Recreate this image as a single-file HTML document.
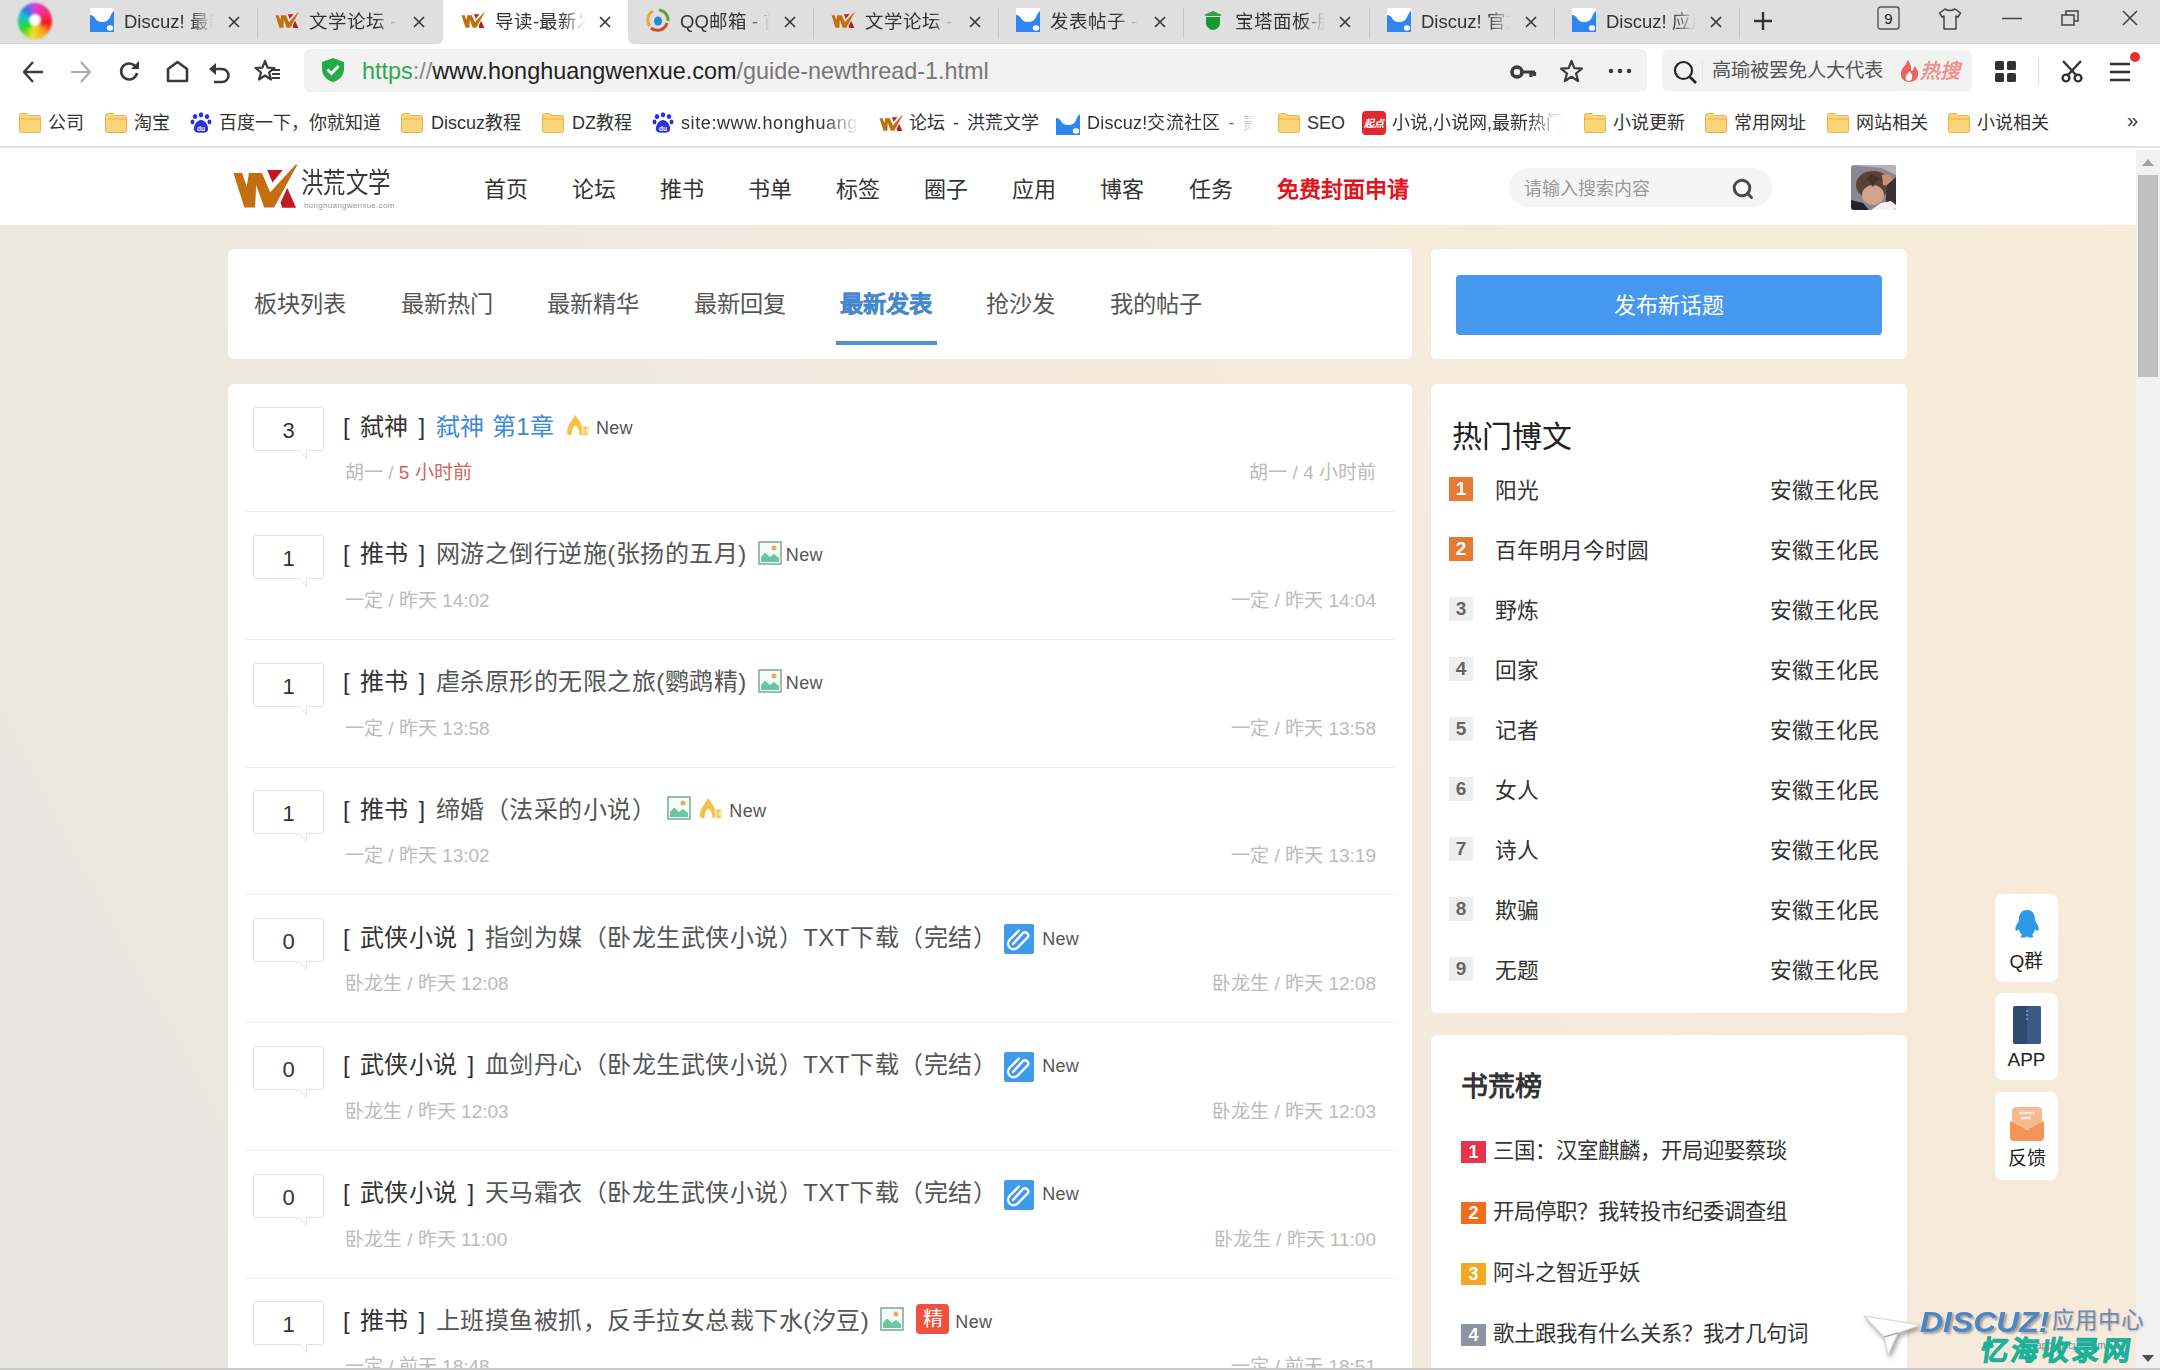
<!DOCTYPE html>
<html lang="zh-CN"><head><meta charset="utf-8">
<style>
*{box-sizing:border-box;margin:0;padding:0}
html,body{width:2160px;height:1370px;overflow:hidden;background:#fff;font-family:"Liberation Sans",sans-serif;color:#333}
.a{position:absolute;white-space:nowrap}
svg{position:absolute;overflow:visible}
/* chrome */
#tabbar{position:absolute;left:0;top:0;width:2160px;height:44px;background:#dfdfdf}
.tab{position:absolute;top:0;height:44px;width:185px}
.tab .t{position:absolute;white-space:nowrap;left:52px;top:9px;font-size:18.5px;line-height:26px;color:#333;width:90px;overflow:hidden;-webkit-mask-image:linear-gradient(90deg,#000 74%,transparent 100%)}
.tab .x{position:absolute;left:162px;top:16px;width:12px;height:12px}
.tab.act{background:#fff}
.tab:not(.act):after{content:"";position:absolute}
.fade{overflow:hidden;-webkit-mask-image:linear-gradient(90deg,#000 80%,transparent)}
.sep{position:absolute;top:8px;width:1px;height:31px;background:#c4c4c4}
#toolbar{position:absolute;left:0;top:44px;width:2160px;height:56px;background:#fff}
#bm{position:absolute;left:0;top:100px;width:2160px;height:48px;background:#fff;border-bottom:2px solid #e3e3e3}
.bmi{position:absolute;white-space:nowrap;top:11px;font-size:18px;line-height:24px;color:#333}
/* page */
#page{position:absolute;left:0;top:150px;width:2136px;height:1220px;background:linear-gradient(62deg,#e7e6e0 0%,#ede8de 30%,#f4eadc 60%,#f9ecd9 100%);overflow:hidden}
#hdr{position:absolute;left:0;top:0;width:2136px;height:75px;background:#fff}
.nav{position:absolute;top:23px;font-size:22px;line-height:34px;color:#333}
.card{position:absolute;background:#fff;border-radius:6px}
.ptab{position:absolute;top:38px;font-size:23.2px;line-height:34px;color:#555}
.row{position:absolute;left:0;width:1184px;height:128px}
.cnt{position:absolute;left:25px;top:23px;width:71px;height:44px;border:1px solid #e3e3e3;border-radius:3px;background:#fff;font-size:22px;line-height:45px;text-align:center;color:#333}
.cnt:after{content:"";position:absolute;left:44px;bottom:-9px;width:0;height:0;border-left:9px solid transparent;border-top:9px solid #e3e3e3}
.cnt:before{content:"";position:absolute;left:45px;bottom:-7px;width:0;height:0;border-left:7px solid transparent;border-top:7px solid #fff;z-index:2}
.ttl{position:absolute;left:115px;top:25.5px;font-size:24px;line-height:34px;color:#555;letter-spacing:.5px}
.ttl b{font-weight:normal;color:#333}
.ttl i{font-style:normal;display:inline-block;letter-spacing:0}
.lb{width:16.5px}
.rb{width:27.2px;padding-left:10px}
.meta{position:absolute;left:117px;top:76px;font-size:19px;line-height:26px;color:#bbb}
.meta2{position:absolute;right:36px;top:76px;font-size:19px;line-height:26px;color:#bbb}
.rsep{position:absolute;left:18px;right:16px;bottom:0;height:1px;background:#eee}
.new{font-size:18px;color:#555;letter-spacing:.3px;position:relative;top:-1px}
.hb{position:absolute;left:18px;margin-top:-1px;width:24px;height:24px;font-size:19px;line-height:24px;text-align:center;font-weight:bold;background:#eee;color:#666}
.hbt{position:absolute;left:64px;margin-top:1px;font-size:21.7px;line-height:30px;color:#333}
.hba{position:absolute;right:27px;margin-top:1px;font-size:21.7px;line-height:30px;color:#333}
.sb{position:absolute;left:30px;margin-top:2px;width:25px;height:22px;font-size:18px;line-height:22px;font-weight:bold;text-align:center;color:#fff}
.sbt{position:absolute;left:62px;font-size:21.4px;line-height:30px;color:#333}
.fb{position:absolute;left:1995px;width:63px;background:#fff;border-radius:8px}
.fb .l{position:absolute;left:0;width:63px;text-align:center;font-size:19px;line-height:24px;color:#222}
.ic{position:relative;vertical-align:middle;margin:0 4px 0 4px;top:-3px}
.jing{display:inline-block;vertical-align:middle;position:relative;top:-3px;width:33px;height:30px;background:#ef5140;color:#fff;font-size:20px;line-height:30px;text-align:center;border-radius:4px;margin:0 6px 0 8px}
</style></head><body>

<svg width="0" height="0" style="position:absolute">
<defs>
<symbol id="idz" viewBox="0 0 24 24"><rect x="0" y="0" width="24" height="24" fill="#2f86ee"/><path d="M0 0H24V3C22 4 21 7 20 9C19 12 16 14 12 14C8 14 6 12 5 10C4 8 2 7 0 7Z" fill="#fff"/><ellipse cx="20" cy="20" rx="3.2" ry="2.8" fill="#fff"/></symbol>
<symbol id="iwx" viewBox="2 3 66 46"><path d="M3.4 12.9H12.15L16.7 26.6L19 12.9H31.9L40.2 32.3L66 4.2L67.2 4.9L44 47.5H34.2L26.2 25L25.1 47.5H14.4Z" fill="#c36f10"/><path d="M37.2 9.9H52.8L42.5 22.4Z" fill="#c01a22"/><path d="M57.3 28.1L66.1 47.8H52.4L50.5 42.5Z" fill="#c01a22"/></symbol>
<symbol id="iqq" viewBox="0 0 24 24"><path d="M4 18A10 10 0 0 1 7 3" stroke="#e9a93b" stroke-width="3" fill="none"/><path d="M13 2A10 10 0 0 1 22 13" stroke="#5aa832" stroke-width="3" fill="none"/><path d="M21 15A10 10 0 0 1 5 20" stroke="#d9481e" stroke-width="3" fill="none"/><ellipse cx="12" cy="13" rx="4" ry="4.6" fill="#1a8ed8"/></symbol>
<symbol id="ibt" viewBox="0 0 24 24"><path d="M3 7L12 3L21 7L19 8H5Z" fill="#3a9a55"/><path d="M5 9H19V15C19 19 15 22 12 22C9 22 5 19 5 15Z" fill="#139a33"/></symbol>
<symbol id="ifold" viewBox="0 0 24 22"><path d="M1.5 3.5Q1.5 1.5 3.5 1.5H9L11 3.5H20.5Q22.5 3.5 22.5 5.5V18.5Q22.5 20.5 20.5 20.5H3.5Q1.5 20.5 1.5 18.5Z" fill="#fcd57a" stroke="#e8b34d" stroke-width="1"/><path d="M1.5 7H22.5" stroke="#e8b34d" stroke-width="1"/></symbol>
<symbol id="ipaw" viewBox="0 0 22 22"><ellipse cx="5" cy="4.5" rx="2.2" ry="2.6" fill="#2932e1"/><ellipse cx="11" cy="2.8" rx="2.2" ry="2.6" fill="#2932e1"/><ellipse cx="17" cy="4.5" rx="2.2" ry="2.6" fill="#2932e1"/><ellipse cx="2.5" cy="10" rx="2" ry="2.4" fill="#2932e1"/><ellipse cx="19.5" cy="10" rx="2" ry="2.4" fill="#2932e1"/><path d="M11 8C7 8 3 14 4 18C5 21 9 21 11 20.5C13 21 17 21 18 18C19 14 15 8 11 8Z" fill="#2932e1"/><text x="11" y="18.5" font-size="6.5" fill="#fff" text-anchor="middle" font-family="Liberation Sans" font-weight="bold">du</text></symbol>
</defs></svg>
<div id="tabbar">
<div style="position:absolute;left:18px;top:3px;width:34px;height:36px;border-radius:50%;background:conic-gradient(from 0deg,#e53ad8 0deg,#f22a55 70deg,#f01a1a 100deg,#f5a21c 140deg,#f2e12a 190deg,#28d22a 240deg,#1bc8d0 290deg,#2a7de8 320deg,#e53ad8 360deg);filter:blur(0.8px)"></div>
<div style="position:absolute;left:29px;top:14px;width:12px;height:12px;border-radius:50%;background:#fff;filter:blur(1px)"></div>
<div class="tab" style="left:72px"><svg style="left:18px;top:8px" width="24" height="24"><use href="#idz"/></svg><div class="t">Discuz! 最新</div><svg style="left:156px;top:16px" width="12" height="12"><path d="M1 1L11 11M11 1L1 11" stroke="#3a3a3a" stroke-width="1.7"/></svg></div>
<div class="tab" style="left:257px"><svg style="left:18px;top:11px" width="24" height="18"><use href="#iwx"/></svg><div class="t">文学论坛 - 洪</div><svg style="left:156px;top:16px" width="12" height="12"><path d="M1 1L11 11M11 1L1 11" stroke="#3a3a3a" stroke-width="1.7"/></svg></div>
<div class="tab act" style="left:443px"><svg style="left:18px;top:11px" width="24" height="18"><use href="#iwx"/></svg><div class="t">导读-最新发表</div><svg style="left:156px;top:16px" width="12" height="12"><path d="M1 1L11 11M11 1L1 11" stroke="#3a3a3a" stroke-width="1.7"/></svg></div>
<div class="tab" style="left:628px"><svg style="left:18px;top:8px" width="24" height="24"><use href="#iqq"/></svg><div class="t">QQ邮箱 - 首</div><svg style="left:156px;top:16px" width="12" height="12"><path d="M1 1L11 11M11 1L1 11" stroke="#3a3a3a" stroke-width="1.7"/></svg></div>
<div class="tab" style="left:813px"><svg style="left:18px;top:11px" width="24" height="18"><use href="#iwx"/></svg><div class="t">文学论坛 - 洪</div><svg style="left:156px;top:16px" width="12" height="12"><path d="M1 1L11 11M11 1L1 11" stroke="#3a3a3a" stroke-width="1.7"/></svg></div>
<div class="tab" style="left:998px"><svg style="left:18px;top:8px" width="24" height="24"><use href="#idz"/></svg><div class="t">发表帖子 - 洪</div><svg style="left:156px;top:16px" width="12" height="12"><path d="M1 1L11 11M11 1L1 11" stroke="#3a3a3a" stroke-width="1.7"/></svg></div>
<div class="tab" style="left:1183px"><svg style="left:18px;top:8px" width="24" height="24"><use href="#ibt"/></svg><div class="t">宝塔面板-服</div><svg style="left:156px;top:16px" width="12" height="12"><path d="M1 1L11 11M11 1L1 11" stroke="#3a3a3a" stroke-width="1.7"/></svg></div>
<div class="tab" style="left:1369px"><svg style="left:18px;top:8px" width="24" height="24"><use href="#idz"/></svg><div class="t">Discuz! 官方</div><svg style="left:156px;top:16px" width="12" height="12"><path d="M1 1L11 11M11 1L1 11" stroke="#3a3a3a" stroke-width="1.7"/></svg></div>
<div class="tab" style="left:1554px"><svg style="left:18px;top:8px" width="24" height="24"><use href="#idz"/></svg><div class="t">Discuz! 应用</div><svg style="left:156px;top:16px" width="12" height="12"><path d="M1 1L11 11M11 1L1 11" stroke="#3a3a3a" stroke-width="1.7"/></svg></div>
<div class="sep" style="left:257px"></div>
<div class="sep" style="left:813px"></div>
<div class="sep" style="left:998px"></div>
<div class="sep" style="left:1183px"></div>
<div class="sep" style="left:1369px"></div>
<div class="sep" style="left:1554px"></div>
<div class="sep" style="left:1739px"></div>
<svg style="left:1753px;top:11px" width="20" height="20"><path d="M10 1V19M1 10H19" stroke="#333" stroke-width="2.4"/></svg>
<svg style="left:1877px;top:6px" width="23" height="24"><rect x="1" y="1" width="21" height="22" rx="2.5" fill="none" stroke="#555" stroke-width="1.4"/><text x="11.5" y="18" font-size="15" text-anchor="middle" fill="#222" font-family="Liberation Sans">9</text></svg>
<svg style="left:1938px;top:7px" width="24" height="24"><path d="M7 2L1.5 6L4 10L6 9V22H18V9L20 10L22.5 6L17 2Q12 5 7 2Z" fill="none" stroke="#444" stroke-width="1.5" stroke-linejoin="round"/></svg>
<svg style="left:2002px;top:17px" width="20" height="3"><path d="M0 1.5H20" stroke="#444" stroke-width="1.5"/></svg>
<svg style="left:2061px;top:10px" width="18" height="16"><path d="M1 5H13V15H1Z M5 5V1H17V11H13" fill="none" stroke="#444" stroke-width="1.5"/></svg>
<svg style="left:2122px;top:10px" width="16" height="16"><path d="M1 1L15 15M15 1L1 15" stroke="#444" stroke-width="1.6"/></svg>
</div>
<div style="position:absolute;left:436px;top:38px;width:7px;height:6px;background:#fff"><div style="width:7px;height:6px;background:#dfdfdf;border-bottom-right-radius:6px"></div></div>
<div style="position:absolute;left:628px;top:38px;width:7px;height:6px;background:#fff"><div style="width:7px;height:6px;background:#dfdfdf;border-bottom-left-radius:6px"></div></div>
<div style="position:absolute;left:0;top:43px;width:437px;height:1px;background:#d8d8d8"></div><div style="position:absolute;left:634px;top:43px;width:1526px;height:1px;background:#d8d8d8"></div>
<div id="toolbar">
<svg style="left:22px;top:16px" width="22" height="24"><path d="M21 12H2M11 2L2 12L11 22" fill="none" stroke="#3a3a3a" stroke-width="2.4" stroke-linejoin="round"/></svg>
<svg style="left:70px;top:16px" width="22" height="24"><path d="M1 12H20M11 2L20 12L11 22" fill="none" stroke="#aaa" stroke-width="2.2"/></svg>
<svg style="left:118px;top:16px" width="23" height="23"><path d="M19 13A8 8 0 1 1 17 6" fill="none" stroke="#3a3a3a" stroke-width="2.6"/><path d="M21 1V9H13Z" fill="#3a3a3a"/></svg>
<svg style="left:166px;top:16px" width="23" height="23"><path d="M2 9L11.5 2L21 9V21H2Z" fill="none" stroke="#3a3a3a" stroke-width="2.6" stroke-linejoin="round"/></svg>
<svg style="left:208px;top:17px" width="23" height="23"><path d="M3 8H14A6.5 6.5 0 0 1 14 21H6" fill="none" stroke="#3a3a3a" stroke-width="2.6"/><path d="M8 2V14L1 8Z" fill="#3a3a3a"/></svg>
<svg style="left:255px;top:16px" width="26" height="23"><path d="M10 1L12.6 7.6L19.5 8L14 12.5L16 19.5L10 15.5L4 19.5L6 12.5L0.5 8L7.4 7.6Z" fill="none" stroke="#3a3a3a" stroke-width="2.2" stroke-linejoin="round"/><path d="M16 10H25M17 14H25M17 18H25" stroke="#3a3a3a" stroke-width="2.2"/></svg>
<div style="position:absolute;left:304px;top:5px;width:1343px;height:43px;background:#f2f2f2;border-radius:6px"></div>
<svg style="left:321px;top:13px" width="24" height="26"><path d="M12 1L23 5V12C23 19 17 24 12 25C7 24 1 19 1 12V5Z" fill="#22ab48"/><path d="M6.5 12.5L10.5 16.5L17.5 9" fill="none" stroke="#fff" stroke-width="2.8"/></svg>
<div class="a" style="left:362px;top:12px;font-size:23.4px;line-height:30px;color:#222"><span style="color:#2fa84f">https</span><span style="color:#888">://</span>www.honghuangwenxue.com<span style="color:#777">/guide-newthread-1.html</span></div>
<svg style="left:1510px;top:17px" width="26" height="22"><circle cx="7" cy="11" r="5" fill="none" stroke="#3a3a3a" stroke-width="3.6"/><path d="M11 11H25M21 11V16M24.5 11V15" stroke="#3a3a3a" stroke-width="3.2"/></svg>
<svg style="left:1559px;top:15px" width="25" height="25"><path d="M12.5 2L15.3 9.2L23 9.6L17 14.5L19.2 22L12.5 17.8L5.8 22L8 14.5L2 9.6L9.7 9.2Z" fill="none" stroke="#3a3a3a" stroke-width="2.2" stroke-linejoin="round"/></svg>
<svg style="left:1608px;top:24px" width="24" height="6"><circle cx="3" cy="3" r="2.3" fill="#3a3a3a"/><circle cx="12" cy="3" r="2.3" fill="#3a3a3a"/><circle cx="21" cy="3" r="2.3" fill="#3a3a3a"/></svg>
<div style="position:absolute;left:1662px;top:6px;width:310px;height:41px;background:#f2f2f2;border-radius:6px"></div>
<svg style="left:1673px;top:16px" width="25" height="25"><circle cx="10.5" cy="10.5" r="8.5" fill="none" stroke="#222" stroke-width="2.2"/><path d="M17 17L23 23" stroke="#222" stroke-width="2.6"/></svg>
<div style="position:absolute;left:1702px;top:16px;width:1px;height:22px;background:#e6e6e6"></div>
<div class="a" style="left:1712px;top:13px;font-size:19.3px;line-height:28px;color:#555">高瑜被罢免人大代表</div>
<svg style="left:1898px;top:15px" width="22" height="24"><path d="M9 1C10 5 4 8 3 13C2 19 6 23 11 23C17 23 21 19 20 13C19 9 16 7 16 7C16 10 15 12 13 12C14 8 12 3 9 1Z" fill="#f06060"/><path d="M11 22C8 22 7 19 8 17C9 15 11 14 11 12C13 14 15 16 14 19C14 21 12 22 11 22Z" fill="#fff"/></svg>
<div class="a" style="left:1920px;top:13px;font-size:20px;line-height:28px;color:#f06a6a;font-weight:bold;font-style:italic;opacity:.7">热搜</div>
<svg style="left:1995px;top:17px" width="21" height="21"><rect x="0" y="0" width="9" height="9" rx="1.5" fill="#333"/><rect x="12" y="0" width="9" height="9" rx="1.5" fill="#333"/><rect x="0" y="12" width="9" height="9" rx="1.5" fill="#333"/><rect x="12" y="12" width="9" height="9" rx="1.5" fill="#333"/></svg>
<div style="position:absolute;left:2038px;top:14px;width:1px;height:27px;background:#ddd"></div>
<svg style="left:2060px;top:15px" width="24" height="24"><path d="M3 2L17 17M21 2L7 17" stroke="#333" stroke-width="2.4"/><circle cx="6" cy="19" r="3.4" fill="none" stroke="#333" stroke-width="2.4"/><circle cx="18" cy="19" r="3.4" fill="none" stroke="#333" stroke-width="2.4"/></svg>
<svg style="left:2110px;top:18px" width="22" height="20"><path d="M0 2H20M0 10H20M0 18H20" stroke="#333" stroke-width="2.6"/></svg>
<div style="position:absolute;left:2130px;top:8px;width:10px;height:10px;border-radius:50%;background:#e8312b"></div>
</div>
<div id="bm">
<svg style="left:18px;top:12px" width="24" height="22"><use href="#ifold"/></svg><div class="bmi" style="left:48px">公司</div>
<svg style="left:104px;top:12px" width="24" height="22"><use href="#ifold"/></svg><div class="bmi" style="left:134px">淘宝</div>
<svg style="left:190px;top:12px" width="22" height="22"><use href="#ipaw"/></svg><div class="bmi" style="left:219px">百度一下，你就知道</div>
<svg style="left:400px;top:12px" width="24" height="22"><use href="#ifold"/></svg><div class="bmi" style="left:431px">Discuz教程</div>
<svg style="left:541px;top:12px" width="24" height="22"><use href="#ifold"/></svg><div class="bmi" style="left:572px">DZ教程</div>
<svg style="left:652px;top:12px" width="22" height="22"><use href="#ipaw"/></svg><div class="bmi fade" style="left:681px;width:178px;letter-spacing:.6px">site:www.honghuang</div>
<svg style="left:879px;top:14px" width="24" height="18"><use href="#iwx"/></svg><div class="bmi" style="left:909px;word-spacing:3px">论坛 - 洪荒文学</div>
<svg style="left:1056px;top:11px" width="24" height="24"><use href="#idz"/></svg><div class="bmi fade" style="left:1087px;width:168px;word-spacing:3px;letter-spacing:.2px">Discuz!交流社区 - 贰</div>
<svg style="left:1277px;top:12px" width="24" height="22"><use href="#ifold"/></svg><div class="bmi" style="left:1307px">SEO</div>
<svg style="left:1362px;top:111px;top:11px" width="24" height="24"><rect x="0" y="0" width="24" height="24" rx="4" fill="#e4262e"/><text x="12" y="16" font-size="10" fill="#fff" text-anchor="middle" font-weight="bold" font-style="italic" font-family="Liberation Sans">起点</text></svg><div class="bmi fade" style="left:1392px;width:170px">小说,小说网,最新热门</div>
<svg style="left:1583px;top:12px" width="24" height="22"><use href="#ifold"/></svg><div class="bmi" style="left:1613px">小说更新</div>
<svg style="left:1704px;top:12px" width="24" height="22"><use href="#ifold"/></svg><div class="bmi" style="left:1734px">常用网址</div>
<svg style="left:1826px;top:12px" width="24" height="22"><use href="#ifold"/></svg><div class="bmi" style="left:1856px">网站相关</div>
<svg style="left:1947px;top:12px" width="24" height="22"><use href="#ifold"/></svg><div class="bmi" style="left:1977px">小说相关</div>
<div class="bmi" style="left:2127px;top:8px;font-size:20px">»</div>
</div>

<div id="page">
<div id="hdr">
<svg style="left:230px;top:10px" width="70" height="52" viewBox="0 0 70 52">
<path d="M3.4 12.9H12.15L16.7 26.6L19 12.9H31.9L40.2 32.3L66 4.2L67.2 4.9L44 47.5H34.2L26.2 25L25.1 47.5H14.4Z" fill="#c36f10"/>
<path d="M37.2 9.9H52.8L42.5 22.4Z" fill="#c01a22"/>
<path d="M57.3 28.1L66.1 47.8H52.4L50.5 42.5Z" fill="#c01a22"/>
</svg>
<div class="a" style="left:301px;top:16px;font-size:28px;line-height:36px;color:#3a3a3a;transform:scaleX(0.8);transform-origin:0 0">洪荒文学</div>
<div class="a" style="left:304px;top:51px;font-size:8px;line-height:10px;color:#999;letter-spacing:0.3px">honghuangwenxue.com</div>

<div class="nav" style="left:484px">首页</div>
<div class="nav" style="left:572px">论坛</div>
<div class="nav" style="left:660px">推书</div>
<div class="nav" style="left:748px">书单</div>
<div class="nav" style="left:836px">标签</div>
<div class="nav" style="left:924px">圈子</div>
<div class="nav" style="left:1012px">应用</div>
<div class="nav" style="left:1100px">博客</div>
<div class="nav" style="left:1189px">任务</div>
<div class="nav" style="left:1277px;color:#e1141e;font-weight:bold">免费封面申请</div>
<div style="position:absolute;left:1509px;top:18px;width:263px;height:39px;border-radius:20px;background:#f5f5f5"></div>
<div class="a" style="left:1524px;top:26px;font-size:18px;line-height:26px;color:#999">请输入搜索内容</div>
<svg style="left:1732px;top:28px" width="22" height="22"><circle cx="10" cy="10" r="7.8" fill="none" stroke="#4a4a4a" stroke-width="3"/><path d="M15.5 15.5L19.5 19.5" stroke="#4a4a4a" stroke-width="3" stroke-linecap="round"/></svg>
<svg style="left:1851px;top:15px" width="45" height="45" viewBox="0 0 45 45"><defs><clipPath id="avc"><rect width="45" height="45" rx="3"/></clipPath></defs><g clip-path="url(#avc)">
<rect width="45" height="45" fill="#8d8793"/>
<path d="M0 0H45V10L30 3Z" fill="#b8b2b8"/>
<ellipse cx="22" cy="20" rx="17" ry="14" fill="#5b4236"/>
<ellipse cx="22" cy="30" rx="11" ry="10" fill="#d3a28c"/>
<path d="M10 20L16 14L22 22L28 13L34 20L30 14L20 9Z" fill="#4a3328"/>
<path d="M31 10Q40 8 42 16Q40 22 32 20Z" fill="#c79275"/>
<path d="M36 20L45 12V45H34Z" fill="#3a3038"/>
<path d="M0 35L12 38L18 45H0Z" fill="#222430"/>
<path d="M20 45L30 38L40 36L45 40V45Z" fill="#f2f1f0"/>
</g></svg>
</div>
<div class="card" style="left:228px;top:99px;width:1184px;height:110px">
<div class="ptab" style="left:26px">板块列表</div>
<div class="ptab" style="left:173px">最新热门</div>
<div class="ptab" style="left:319px">最新精华</div>
<div class="ptab" style="left:466px">最新回复</div>
<div class="ptab" style="left:612px;color:#4589cc;font-weight:bold;-webkit-text-stroke:.4px #4589cc">最新发表</div>
<div class="ptab" style="left:758px">抢沙发</div>
<div class="ptab" style="left:882px">我的帖子</div>
<div style="position:absolute;left:608px;top:92px;width:101px;height:4px;background:#5093cf"></div>
</div>
<div class="card" style="left:1431px;top:99px;width:476px;height:110px">
<div style="position:absolute;left:25px;top:26px;width:426px;height:60px;background:#4598ed;border-radius:4px;color:#fff;font-size:22px;line-height:62px;text-align:center">发布新话题</div>
</div>
<div class="card" style="left:228px;top:234px;width:1184px;height:1100px">
<div class="row" style="top:0.00px"><div class="cnt">3</div><div class="ttl"><b><i class="lb">[</i>弑神<i class="rb">]</i></b><span style='color:#3c8ad6'>弑神 第1章</span> <svg class="ic" style="margin-right:6px" width="24" height="24" viewBox="0 0 24 24"><path d="M1 19C1 13 6 8 9 2C12.5 7 17 12 17 18V22H13.5C13.5 18 11.5 12.5 9.5 12.5C7.5 12.5 5.5 18 5.5 22H2.5C1.5 21.5 1 20.5 1 19Z" fill="#f6c140"/><path d="M15.5 13H23V22.5H15.5Z" fill="#f8eaa6"/><path d="M17.2 14.8H21.2M19.2 14.8V20.8M17.2 20.8H21.2" stroke="#ecc95a" stroke-width="1.4"/></svg><span class="new">New</span></div><div class="meta">胡一 / <span style='color:#d2665e'>5 小时前</span></div><div class="meta2">胡一 / 4 小时前</div><div class="rsep"></div></div>
<div class="row" style="top:127.75px"><div class="cnt">1</div><div class="ttl"><b><i class="lb">[</i>推书<i class="rb">]</i></b>网游之倒行逆施(张扬的五月) <svg class="ic" width="24" height="24" viewBox="0 0 24 24"><rect x="1" y="1" width="22" height="22" fill="#f2fcf8" stroke="#78a898" stroke-width="1.5"/><path d="M3 21V16L7 11.5L12 16L16 13L21 17V21Z" fill="#6cc4a2"/><circle cx="16" cy="7" r="2.5" fill="#e2b257"/></svg><span class="new">New</span></div><div class="meta">一定 / 昨天 14:02</div><div class="meta2">一定 / 昨天 14:04</div><div class="rsep"></div></div>
<div class="row" style="top:255.50px"><div class="cnt">1</div><div class="ttl"><b><i class="lb">[</i>推书<i class="rb">]</i></b>虐杀原形的无限之旅(鹦鹉精) <svg class="ic" width="24" height="24" viewBox="0 0 24 24"><rect x="1" y="1" width="22" height="22" fill="#f2fcf8" stroke="#78a898" stroke-width="1.5"/><path d="M3 21V16L7 11.5L12 16L16 13L21 17V21Z" fill="#6cc4a2"/><circle cx="16" cy="7" r="2.5" fill="#e2b257"/></svg><span class="new">New</span></div><div class="meta">一定 / 昨天 13:58</div><div class="meta2">一定 / 昨天 13:58</div><div class="rsep"></div></div>
<div class="row" style="top:383.25px"><div class="cnt">1</div><div class="ttl"><b><i class="lb">[</i>推书<i class="rb">]</i></b>缔婚（法采的小说） <svg class="ic" width="24" height="24" viewBox="0 0 24 24"><rect x="1" y="1" width="22" height="22" fill="#f2fcf8" stroke="#78a898" stroke-width="1.5"/><path d="M3 21V16L7 11.5L12 16L16 13L21 17V21Z" fill="#6cc4a2"/><circle cx="16" cy="7" r="2.5" fill="#e2b257"/></svg><svg class="ic" style="margin-right:6px" width="24" height="24" viewBox="0 0 24 24"><path d="M1 19C1 13 6 8 9 2C12.5 7 17 12 17 18V22H13.5C13.5 18 11.5 12.5 9.5 12.5C7.5 12.5 5.5 18 5.5 22H2.5C1.5 21.5 1 20.5 1 19Z" fill="#f6c140"/><path d="M15.5 13H23V22.5H15.5Z" fill="#f8eaa6"/><path d="M17.2 14.8H21.2M19.2 14.8V20.8M17.2 20.8H21.2" stroke="#ecc95a" stroke-width="1.4"/></svg><span class="new">New</span></div><div class="meta">一定 / 昨天 13:02</div><div class="meta2">一定 / 昨天 13:19</div><div class="rsep"></div></div>
<div class="row" style="top:511.00px"><div class="cnt">0</div><div class="ttl"><b><i class="lb">[</i>武侠小说<i class="rb">]</i></b>指剑为媒（卧龙生武侠小说）TXT下载（完结） <svg class="ic" style="margin-left:0;margin-right:8px;top:0" width="30" height="30" viewBox="0 0 30 30"><rect x="0" y="0" width="30" height="30" rx="2" fill="#3d9be9"/><path d="M9 21L19 10A3.2 3.2 0 0 1 23.5 14.5L13 25A5.5 5.5 0 0 1 5.5 17L15 7.5" fill="none" stroke="#fff" stroke-width="2.4" stroke-linecap="round" transform="translate(0,-1)"/></svg><span class="new">New</span></div><div class="meta">卧龙生 / 昨天 12:08</div><div class="meta2">卧龙生 / 昨天 12:08</div><div class="rsep"></div></div>
<div class="row" style="top:638.75px"><div class="cnt">0</div><div class="ttl"><b><i class="lb">[</i>武侠小说<i class="rb">]</i></b>血剑丹心（卧龙生武侠小说）TXT下载（完结） <svg class="ic" style="margin-left:0;margin-right:8px;top:0" width="30" height="30" viewBox="0 0 30 30"><rect x="0" y="0" width="30" height="30" rx="2" fill="#3d9be9"/><path d="M9 21L19 10A3.2 3.2 0 0 1 23.5 14.5L13 25A5.5 5.5 0 0 1 5.5 17L15 7.5" fill="none" stroke="#fff" stroke-width="2.4" stroke-linecap="round" transform="translate(0,-1)"/></svg><span class="new">New</span></div><div class="meta">卧龙生 / 昨天 12:03</div><div class="meta2">卧龙生 / 昨天 12:03</div><div class="rsep"></div></div>
<div class="row" style="top:766.50px"><div class="cnt">0</div><div class="ttl"><b><i class="lb">[</i>武侠小说<i class="rb">]</i></b>天马霜衣（卧龙生武侠小说）TXT下载（完结） <svg class="ic" style="margin-left:0;margin-right:8px;top:0" width="30" height="30" viewBox="0 0 30 30"><rect x="0" y="0" width="30" height="30" rx="2" fill="#3d9be9"/><path d="M9 21L19 10A3.2 3.2 0 0 1 23.5 14.5L13 25A5.5 5.5 0 0 1 5.5 17L15 7.5" fill="none" stroke="#fff" stroke-width="2.4" stroke-linecap="round" transform="translate(0,-1)"/></svg><span class="new">New</span></div><div class="meta">卧龙生 / 昨天 11:00</div><div class="meta2">卧龙生 / 昨天 11:00</div><div class="rsep"></div></div>
<div class="row" style="top:894.25px"><div class="cnt">1</div><div class="ttl"><b><i class="lb">[</i>推书<i class="rb">]</i></b>上班摸鱼被抓，反手拉女总裁下水(汐豆) <svg class="ic" width="24" height="24" viewBox="0 0 24 24"><rect x="1" y="1" width="22" height="22" fill="#f2fcf8" stroke="#78a898" stroke-width="1.5"/><path d="M3 21V16L7 11.5L12 16L16 13L21 17V21Z" fill="#6cc4a2"/><circle cx="16" cy="7" r="2.5" fill="#e2b257"/></svg><span class="jing">精</span><span class="new">New</span></div><div class="meta">一定 / 前天 18:48</div><div class="meta2">一定 / 前天 18:51</div></div>
</div>
<div class="card" style="left:1431px;top:234px;width:476px;height:629px">
<div class="a" style="left:21px;top:34px;font-size:30px;line-height:38px;color:#222">热门博文</div>
<div class="hb" style="top:94px;background:#e57a35;color:#fff">1</div><div class="hbt" style="top:91px">阳光</div><div class="hba" style="top:91px">安徽王化民</div>
<div class="hb" style="top:154px;background:#e57a35;color:#fff">2</div><div class="hbt" style="top:151px">百年明月今时圆</div><div class="hba" style="top:151px">安徽王化民</div>
<div class="hb" style="top:214px;">3</div><div class="hbt" style="top:211px">野炼</div><div class="hba" style="top:211px">安徽王化民</div>
<div class="hb" style="top:274px;">4</div><div class="hbt" style="top:271px">回家</div><div class="hba" style="top:271px">安徽王化民</div>
<div class="hb" style="top:334px;">5</div><div class="hbt" style="top:331px">记者</div><div class="hba" style="top:331px">安徽王化民</div>
<div class="hb" style="top:394px;">6</div><div class="hbt" style="top:391px">女人</div><div class="hba" style="top:391px">安徽王化民</div>
<div class="hb" style="top:454px;">7</div><div class="hbt" style="top:451px">诗人</div><div class="hba" style="top:451px">安徽王化民</div>
<div class="hb" style="top:514px;">8</div><div class="hbt" style="top:511px">欺骗</div><div class="hba" style="top:511px">安徽王化民</div>
<div class="hb" style="top:574px;">9</div><div class="hbt" style="top:571px">无题</div><div class="hba" style="top:571px">安徽王化民</div>
</div>
<div class="card" style="left:1431px;top:885px;width:476px;height:400px">
<div class="a" style="left:30px;top:33px;font-size:27px;line-height:38px;color:#333;font-weight:bold">书荒榜</div>
<div class="sb" style="top:104px;background:#e8334a">1</div><div class="sbt" style="top:101px">三国：汉室麒麟，开局迎娶蔡琰</div>
<div class="sb" style="top:165px;background:#f26c1c">2</div><div class="sbt" style="top:162px">开局停职？我转投市纪委调查组</div>
<div class="sb" style="top:226px;background:#f5a623">3</div><div class="sbt" style="top:223px">阿斗之智近乎妖</div>
<div class="sb" style="top:287px;background:#8c93a3">4</div><div class="sbt" style="top:284px">歌土跟我有什么关系？我才几句词</div>
</div>
<div class="fb" style="top:744px;height:88px">
<svg style="left:19px;top:15px" width="26" height="30" viewBox="0 0 26 30"><path d="M13 1C7 1 5 6 5 10C5 12 4 13 3 15C1 18 1 21 2 22C3 22 4 21 5 20C5 23 7 25 8 26C6 27 6 28 8 28.5C10 29 12 28 13 27.5C14 28 16 29 18 28.5C20 28 20 27 18 26C19 25 21 23 21 20C22 21 23 22 24 22C25 21 25 18 23 15C22 13 21 12 21 10C21 6 19 1 13 1Z" fill="#2c9ae6"/></svg>
<div class="l" style="top:56px">Q群</div></div>
<div class="fb" style="top:843px;height:87px">
<svg style="left:17px;top:12px" width="30" height="40" viewBox="0 0 30 40"><rect x="1" y="1" width="28" height="38" rx="2" fill="#2d4a70"/><rect x="15" y="1" width="14" height="38" rx="2" fill="#3a5b85"/><path d="M14 6H16M14 10H16M14 14H16" stroke="#8aa0c0" stroke-width="1.5"/></svg>
<div class="l" style="top:55px">APP</div></div>
<div class="fb" style="top:942px;height:88px">
<svg style="left:14px;top:14px" width="36" height="36" viewBox="0 0 36 36"><rect x="3" y="1" width="30" height="22" rx="4" fill="#f7b98e"/><path d="M10 7H26M12 12H22" stroke="#fde6d4" stroke-width="2.4"/><path d="M1 15L18 24L35 15V31Q35 35 31 35H5Q1 35 1 31Z" fill="#f4935a"/></svg>
<div class="l" style="top:55px">反馈</div></div>

</div>
<div style="position:absolute;left:2136px;top:150px;width:24px;height:1220px;background:#f1f1f1">
<svg style="left:6px;top:9px" width="12" height="7"><path d="M6 0L12 7H0Z" fill="#a3a3a3"/></svg>
<div style="position:absolute;left:2px;top:25px;width:20px;height:202px;background:#c1c1c1"></div>
<svg style="left:6px;top:1205px" width="12" height="7"><path d="M0 0H12L6 7Z" fill="#505050"/></svg>
</div>

<div style="position:absolute;left:0;top:1368px;width:2160px;height:2px;background:#c9c9c9"></div>
<div style="position:absolute;left:1862px;top:1305px;width:298px;height:63px">
<svg style="left:0;top:6px" width="62" height="50" viewBox="0 0 62 50"><path d="M2 5L58 14L36 22L26 44L22 26Z" fill="#fff" stroke="#d6d6d6" stroke-width="1.2" stroke-linejoin="round" style="filter:drop-shadow(2px 3px 2px rgba(0,0,0,.35))"/><path d="M36 22L22 26" stroke="#aaa" stroke-width="1.5"/></svg>
<div class="a" style="left:58px;top:0px;font-size:29px;line-height:34px;color:#4a86c8;font-weight:bold;font-style:italic;transform:scaleX(1.1);transform-origin:0 0;text-shadow:2px 2px 2px rgba(0,0,0,.3)">DISCUZ!</div>
<div class="a" style="left:190px;top:1px;font-size:22.5px;line-height:30px;color:#6d8db5;text-shadow:1px 1px 2px rgba(0,0,0,.25)">应用中心</div>
<div class="a" style="left:174px;top:35px;font-size:10px;line-height:12px;color:#888">app.discuz.com</div>
<div class="a" style="left:119px;top:29px;font-size:27px;line-height:34px;color:#1fb09b;font-weight:bold;-webkit-text-stroke:1.1px #1fb09b;transform:skewX(-8deg);letter-spacing:3.5px">忆海收录网</div>
</div>
</body></html>
